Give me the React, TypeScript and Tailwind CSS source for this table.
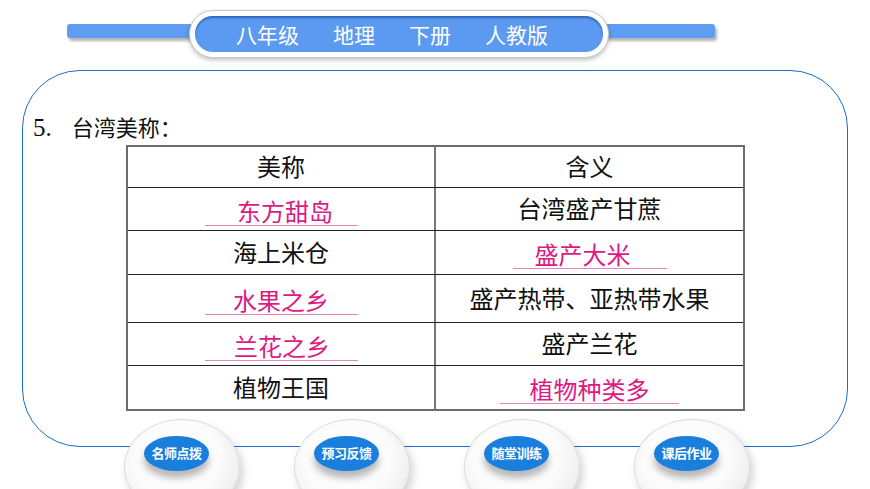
import React from 'react';

type Row = {
  name: string;
  meaning: string;
  answer: 'name' | 'meaning';
  h: string;
  line: string;
  shift: string;
};

const rows: Row[] = [
  { name: '东方甜岛', meaning: '台湾盛产甘蔗', answer: 'name', h: 'h-[43px]', line: 'w-[153px]', shift: 'pl-[8px]' },
  { name: '海上米仓', meaning: '盛产大米', answer: 'meaning', h: 'h-[44px]', line: 'w-[154px]', shift: 'pr-[14px]' },
  { name: '水果之乡', meaning: '盛产热带、亚热带水果', answer: 'name', h: 'h-[48px]', line: 'w-[153px]', shift: 'pl-[0px]' },
  { name: '兰花之乡', meaning: '盛产兰花', answer: 'name', h: 'h-[43px]', line: 'w-[153px]', shift: 'pl-[2px]' },
  { name: '植物王国', meaning: '植物种类多', answer: 'meaning', h: 'h-[43px]', line: 'w-[179px]', shift: 'pl-[0px]' },
];

const buttons = ['名师点拨', '预习反馈', '随堂训练', '课后作业'];

function Answer({ text, line, shift }: { text: string; line: string; shift: string }) {
  return (
    <div className={`${line} ${shift} border-b-[1.5px] border-[#e583bd] text-center text-[#dc1a82] leading-[29px] mt-[3px]`}>
      {text}
    </div>
  );
}

export default function App() {
  return (
    <div className="w-[870px] h-[489px] overflow-hidden bg-white font-['Noto_Sans_CJK_SC',sans-serif]">
      {/* Header */}
      <div className="h-[70px] flex items-start pl-[67px]">
        <div className="mt-[24px] w-[126px] h-[14px] rounded-[3px] bg-[#5e9df1] shadow-[2px_3px_3px_rgba(0,0,0,0.3)]" />
        <div className="mt-[10px] -ml-[4px] w-[420px] h-[48px] rounded-full bg-white border border-[#c8c8c8] shadow-[0_2px_4px_rgba(0,0,0,0.25)] p-[5px] relative z-10">
          <div className="h-full rounded-full bg-[#5b9af0] shadow-[inset_0_2px_2px_rgba(0,40,120,0.45)] flex items-center justify-center gap-[34px] pr-[14px] text-white text-[21px] leading-none">
            <span>八年级</span>
            <span>地理</span>
            <span>下册</span>
            <span>人教版</span>
          </div>
        </div>
        <div className="mt-[24px] -ml-[4px] w-[110px] h-[14px] rounded-[3px] bg-[#5e9df1] shadow-[2px_3px_3px_rgba(0,0,0,0.3)]" />
      </div>

      {/* Frame */}
      <div className="ml-[22px] w-[826px] h-[377px] border-[1.5px] border-[#1e6cc4] rounded-[58px] pt-[40px]">
        <div className="pl-[10px] text-[22px] leading-[30px] text-[#111] flex items-baseline">
          <span className="font-['Liberation_Serif',serif] text-[25px]">5.</span>
          <span className="ml-[20px]">台湾美称：</span>
        </div>
        <div className="mt-[2px] ml-[103px] w-[619px] border-2 border-[#6b6b6b] text-[24px] text-[#111]">
          <div className="flex h-[41px] border-b-[1.5px] border-[#222]">
            <div className="w-[308px] flex items-center justify-center border-r-2 border-[#777] pb-[2px]">美称</div>
            <div className="flex-1 flex items-center justify-center pb-[2px]">含义</div>
          </div>
          {rows.map((r, i) => (
            <div key={r.name} className={`flex ${r.h} ${i < rows.length - 1 ? 'border-b-[1.5px] border-[#222]' : ''}`}>
              {r.answer === 'name' ? (
                <div className="w-[308px] flex items-center justify-center border-r-2 border-[#777]">
                  <Answer text={r.name} line={r.line} shift={r.shift} />
                </div>
              ) : (
                <div className="w-[308px] flex items-center justify-center border-r-2 border-[#777] pb-[2px]">{r.name}</div>
              )}
              {r.answer === 'meaning' ? (
                <div className="flex-1 flex items-center justify-center">
                  <Answer text={r.meaning} line={r.line} shift={r.shift} />
                </div>
              ) : (
                <div className="flex-1 flex items-center justify-center pb-[2px]">{r.meaning}</div>
              )}
            </div>
          ))}
        </div>
      </div>

      {/* Bottom buttons */}
      <div className="-mt-[28px] flex pl-[124px] gap-[54px]">
        {buttons.map((b) => (
          <div
            key={b}
            className="w-[116px] h-[96px] shrink-0 rounded-[50%] border border-[#dcdcdc] bg-[radial-gradient(ellipse_at_45%_40%,#ffffff_0%,#fbfbfb_50%,#ececec_80%,#d6d6d6_100%)] shadow-[3px_5px_8px_rgba(0,0,0,0.18)] flex justify-start pl-[19px] pt-[16px]"
          >
            <div className="w-[65px] h-[35px] rounded-[50%] bg-[#1a7fdc] shadow-[0_7px_7px_rgba(0,0,0,0.28)] flex items-center justify-center text-white text-[13px] font-['Liberation_Serif','Noto_Sans_CJK_SC',serif] font-bold tracking-[-0.5px]">
              {b}
            </div>
          </div>
        ))}
      </div>
    </div>
  );
}
